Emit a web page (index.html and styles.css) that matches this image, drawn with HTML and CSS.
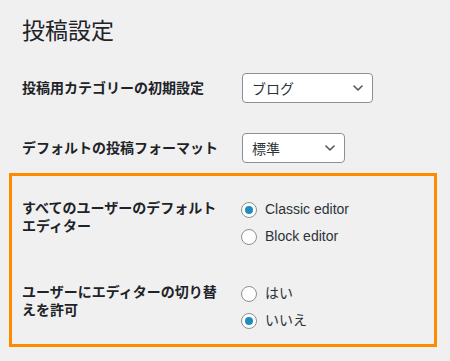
FILE: index.html
```html
<!DOCTYPE html>
<html lang="ja">
<head>
<meta charset="utf-8">
<title>投稿設定</title>
<link rel="stylesheet" href="styles.css">
</head>
<body>
<div class="wrap">
  <h1 class="title">投稿設定</h1>
  <div class="form">
    <div class="row">
      <div class="th">投稿用カテゴリーの初期設定</div>
      <div class="td">
        <div class="select sel-cat"><span>ブログ</span>
          <svg class="chev" width="10" height="6" viewBox="0 0 10 6"><path d="M1 1l4 4 4-4" fill="none" stroke="#50575e" stroke-width="1.6" stroke-linecap="round" stroke-linejoin="round"/></svg>
        </div>
      </div>
    </div>
    <div class="row">
      <div class="th">デフォルトの投稿フォーマット</div>
      <div class="td">
        <div class="select sel-fmt"><span>標準</span>
          <svg class="chev" width="10" height="6" viewBox="0 0 10 6"><path d="M1 1l4 4 4-4" fill="none" stroke="#50575e" stroke-width="1.6" stroke-linecap="round" stroke-linejoin="round"/></svg>
        </div>
      </div>
    </div>
    <div class="group">
      <div class="row">
        <div class="th">すべてのユーザーのデフォルトエディター</div>
        <div class="td radios first">
          <label class="opt"><span class="radio checked"></span>Classic editor</label>
          <label class="opt"><span class="radio"></span>Block editor</label>
        </div>
      </div>
      <div class="row">
        <div class="th">ユーザーにエディターの切り替えを許可</div>
        <div class="td radios">
          <label class="opt"><span class="radio"></span>はい</label>
          <label class="opt"><span class="radio checked"></span>いいえ</label>
        </div>
      </div>
    </div>
  </div>
</div>
</body>
</html>
```

FILE: styles.css
```css
html, body {
  margin: 0;
  padding: 0;
  background: #f0f0f1;
}
body {
  font-family: "Liberation Sans", "Noto Sans CJK JP", sans-serif;
  color: #1d2327;
  font-size: 14px;
  width: 450px;
  height: 361px;
  overflow: hidden;
}
.wrap {
  padding: 0 0 0 22px;
}
.title {
  margin: 0;
  padding: 15px 0 0;
  height: 43px;
  font-size: 23px;
  font-weight: 400;
  line-height: 1.3;
  font-family: "Noto Sans CJK JP", sans-serif;
  color: #1d2327;
}
.row {
  display: grid;
  grid-template-columns: 210px 1fr;
}
.th {
  padding: 20px 10px 20px 0;
  width: 200px;
  line-height: 1.3;
  font-weight: 600;
  font-family: "Noto Sans CJK JP", sans-serif;
  font-size: 14px;
}
.td {
  padding: 15px 10px;
  line-height: 1.3;
  display: flex;
  align-items: center;
}
.select {
  box-sizing: border-box;
  height: 30px;
  border: 1px solid #8c8f94;
  border-radius: 4px;
  background: #fff;
  display: flex;
  align-items: center;
  justify-content: space-between;
  padding: 0 9px 0 9px;
  font-family: "Noto Sans CJK JP", sans-serif;
  font-size: 14px;
  color: #2c3338;
}
.sel-cat { width: 131px; }
.sel-fmt { width: 103px; }
.chev { display: block; }
.group {
  position: relative;
}
.group::before {
  content: "";
  position: absolute;
  top: -5px;
  left: -13px;
  right: 13px;
  bottom: 1px;
  border: 3px solid #ff8a00;
  pointer-events: none;
}
.radios {
  padding: 18px 10px 14px;
  flex-direction: column;
  align-items: flex-start;
}
.radios.first {
  padding-bottom: 12px;
}
.opt {
  height: 27px;
  display: flex;
  align-items: center;
  font-size: 14px;
  color: #2c3338;
}
.radio {
  box-sizing: border-box;
  width: 16px;
  height: 16px;
  border: 1px solid #8c8f94;
  border-radius: 50%;
  background: #fff;
  margin: 0 8px 0 -1px;
  display: flex;
  align-items: center;
  justify-content: center;
}
.radio.checked::after {
  content: "";
  width: 8px;
  height: 8px;
  border-radius: 50%;
  background: #1e8cbe;
}
```
